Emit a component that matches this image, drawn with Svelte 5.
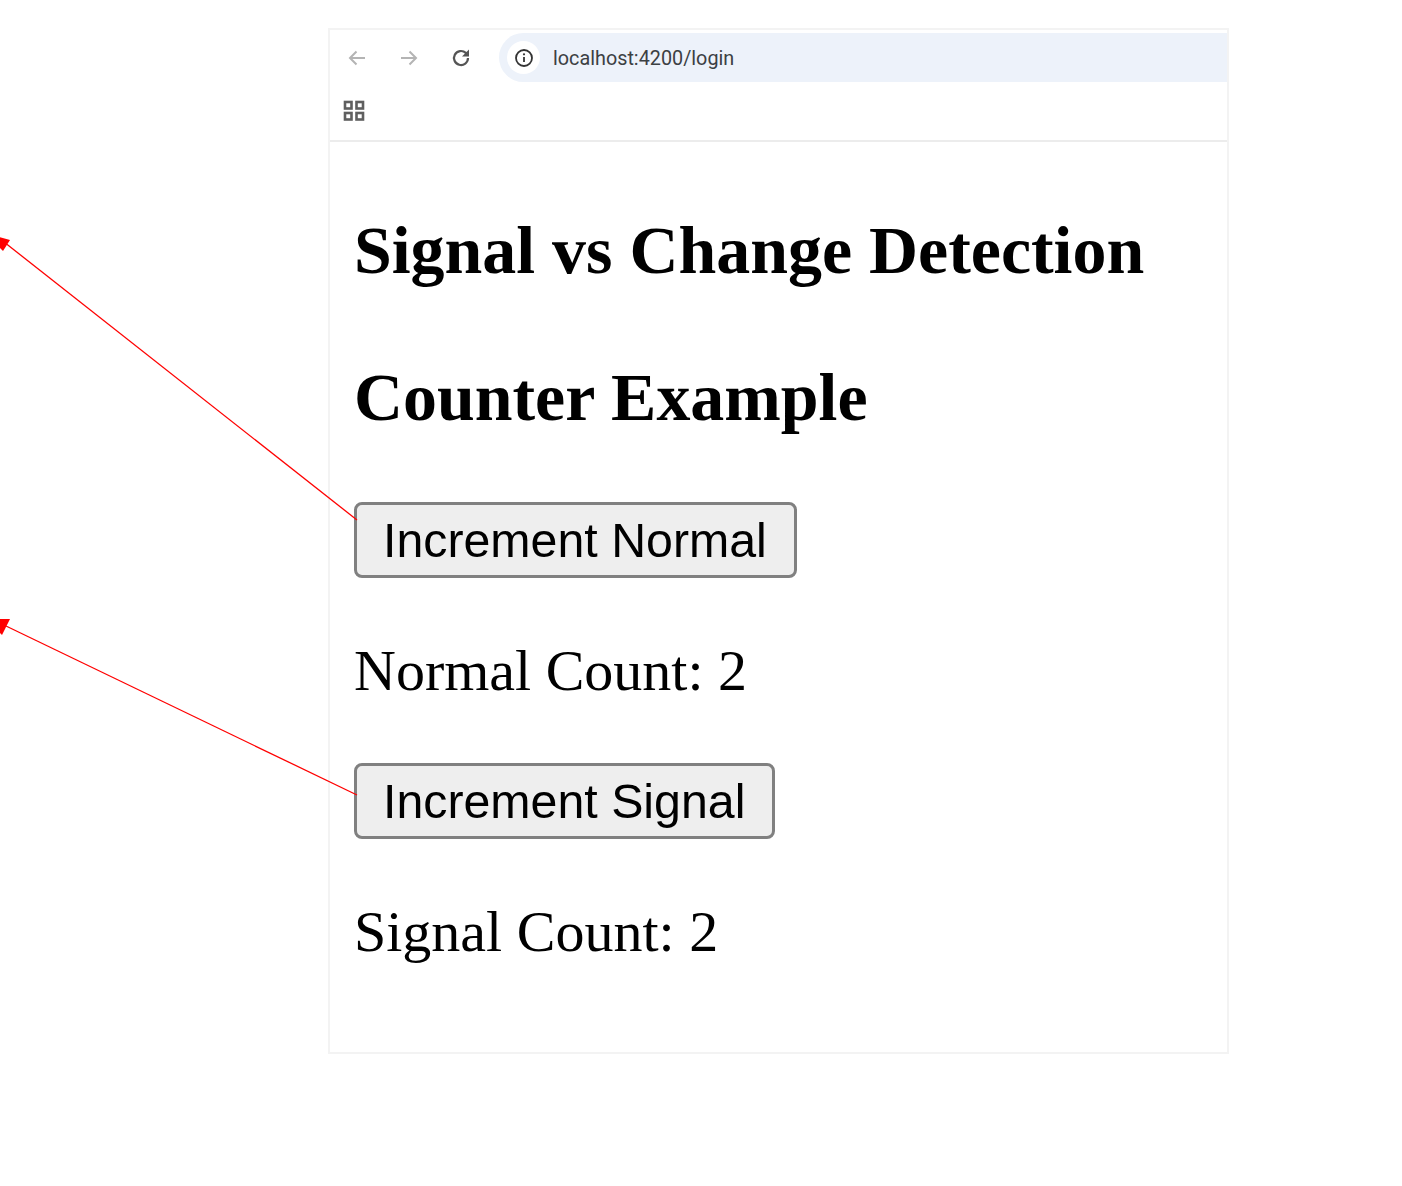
<script lang="ts">
	let normalCount = $state(2);
	let signalCount = $state(2);
</script>

<div class="page">
	<div class="window">
		<div class="toolbar">
			<div class="nav-row">
				<svg class="nav-icon first" viewBox="0 0 22 22" fill="none" stroke="#b4b4b4" stroke-width="2">
					<path d="M19 11H4M10.5 4.5 4 11l6.500 6.500" />
				</svg>
				<svg class="nav-icon" viewBox="0 0 22 22" fill="none" stroke="#b4b4b4" stroke-width="2">
					<path d="M3 11h15M11.500 4.500 18 11l-6.500 6.500" />
				</svg>
				<svg class="nav-icon reload" viewBox="0 0 22 22" fill="none" stroke="#555" stroke-width="2.200">
					<path d="M18 11a7 7 0 1 1-2.200-5.100L18 8" />
					<path d="M19 2.500v7h-7z" fill="#555" stroke="none" />
				</svg>
				<div class="address">
					<span class="info">
						<svg viewBox="0 0 20 20" width="20" height="20" fill="none">
							<circle cx="10" cy="10" r="8" stroke="#333" stroke-width="1.800" />
							<path d="M10 9v5" stroke="#333" stroke-width="1.800" />
							<circle cx="10" cy="6.300" r="1.100" fill="#333" />
						</svg>
					</span>
					<span class="url">localhost:4200/login</span>
				</div>
			</div>
			<div class="bookmarks">
				<svg viewBox="0 0 22 22" width="22" height="22" fill="none" stroke="#5f5f5f" stroke-width="2.600">
					<rect x="2" y="2" width="6.500" height="6.500" />
					<rect x="13.500" y="2" width="6.500" height="6.500" />
					<rect x="2" y="13" width="6.500" height="6.500" />
					<rect x="13.500" y="13" width="6.500" height="6.500" />
				</svg>
			</div>
		</div>

		<div class="content">
			<h1>Signal vs Change Detection</h1>
			<h2>Counter Example</h2>
			<button onclick={() => normalCount++}>Increment Normal</button>
			<p class="normal">Normal Count: {normalCount}</p>
			<button onclick={() => signalCount++}>Increment Signal</button>
			<p>Signal Count: {signalCount}</p>
		</div>
	</div>

	<svg class="arrows" width="360" height="800" viewBox="0 0 360 800" fill="none">
		<path d="M357 520 4 242" stroke="#f00" stroke-width="1.300" />
		<path d="M-1 237 10 240 3 251-1 247z" fill="#f00" />
		<path d="M357 795 6 626" stroke="#f00" stroke-width="1.300" />
		<path d="M-1 619 10 619 2 635-1 632z" fill="#f00" />
	</svg>
</div>

<style>
	:global(body) {
		margin: 0;
		background: #fff;
	}

	.page {
		position: relative;
		width: 1402px;
		height: 1186px;
		padding: 28px 0 0 328px;
		box-sizing: border-box;
		overflow: hidden;
	}

	.arrows {
		position: absolute;
		top: 0;
		left: 0;
		pointer-events: none;
	}

	.window {
		width: 901px;
		height: 1026px;
		box-sizing: border-box;
		border: 2px solid #f3f3f3;
	}

	.toolbar {
		height: 112px;
		padding-top: 3px;
		box-sizing: border-box;
		border-bottom: 2px solid #ececec;
	}

	.nav-row {
		display: flex;
		align-items: center;
		height: 49px;
	}

	.nav-icon {
		width: 22px;
		height: 22px;
		margin-right: 30px;
	}

	.nav-icon.first {
		margin-left: 16px;
	}

	.nav-icon.reload {
		margin-right: 27px;
	}

	.address {
		flex: 1;
		display: flex;
		align-items: center;
		height: 49px;
		border-radius: 25px 0 0 25px;
		background: #edf2fa;
		padding-left: 8px;
	}

	.info {
		display: flex;
		align-items: center;
		justify-content: center;
		width: 33px;
		height: 33px;
		border-radius: 50%;
		background: #fff;
	}

	.url {
		margin: 1px 0 0 13px;
		font: 19.800px "Roboto", "Noto Sans", sans-serif;
		color: #3c4043;
	}

	.bookmarks {
		display: flex;
		padding: 18px 0 0 13px;
	}

	.content {
		padding-left: 24px;
		color: #000;
		font-family: "Liberation Serif", serif;
	}

	h1,
	h2 {
		margin: 0;
		font-size: 67.900px;
		line-height: 74px;
		font-weight: 700;
	}

	h1 {
		margin-top: 71px;
	}

	h2 {
		margin-top: 73px;
	}

	button {
		display: block;
		height: 76px;
		margin: 0;
		padding: 0 27px 0 26px;
		box-sizing: border-box;
		font: 48.300px "Liberation Sans", Arial, sans-serif;
		color: #000;
		background: #eee;
		border: 3px solid #808080;
		border-radius: 8px;
	}

	h2 + button {
		margin-top: 68px;
	}

	p {
		margin: 0;
		height: 185px;
		padding-top: 62px;
		box-sizing: border-box;
		font-size: 58px;
		line-height: 62px;
	}
</style>
